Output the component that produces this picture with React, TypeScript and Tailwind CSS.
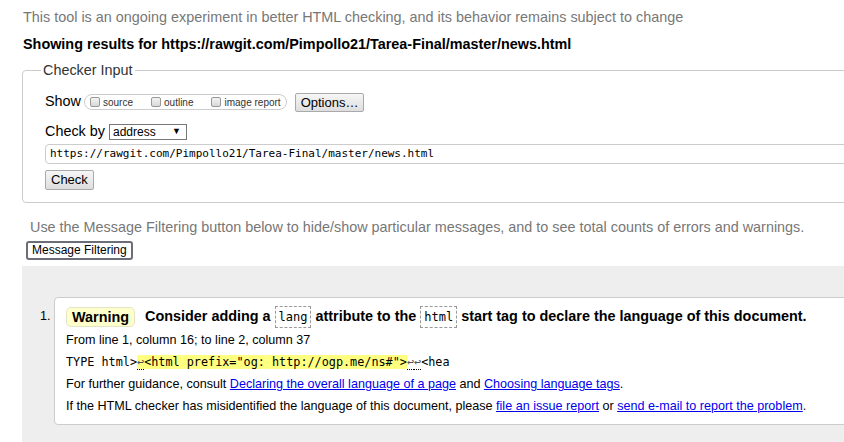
import React from 'react';

const Box: React.FC<{ children: React.ReactNode }> = ({ children }) => (
  <code className="inline-block border border-dashed border-[#999] px-[3px] leading-[20px] font-['DejaVu_Sans_Mono',monospace] text-[12px] font-normal align-middle">
    {children}
  </code>
);

const Check: React.FC<{ label: string }> = ({ label }) => (
  <label className="flex items-center gap-[3px] text-[10px] text-[#333]">
    <span className="w-[10px] h-[10px] rounded-[2px] border border-[#999] bg-gradient-to-b from-[#f4f4f4] to-[#d8d8d8]" />
    {label}
  </label>
);

const Ret = () => <span className="border-b border-dotted border-black text-[#555]">↩</span>;

const link = 'text-[#00e] underline';

export default function App() {
  return (
    <div className="w-[844px] h-[442px] overflow-hidden bg-white font-['Liberation_Sans',Arial,sans-serif] text-[14.4px] text-black">
      <div className="w-[960px]">
        <p className="pl-[23px] pt-[7px] leading-[20px] text-[#777]">
          This tool is an ongoing experiment in better HTML checking, and its behavior remains subject to change
        </p>
        <p className="pl-[23px] mt-[7px] leading-[20px] font-bold">
          Showing results for https://rawgit.com/Pimpollo21/Tarea-Final/master/news.html
        </p>

        <fieldset className="ml-[22px] mt-[7px] border border-[#ccc] rounded-[4px] pl-[22px] pb-[11px]">
          <legend className="-ml-[4px] px-[2px] leading-[18px] text-[#333]">Checker Input</legend>

          <div className="flex items-center mt-[13px] h-[20px]">
            <span className="mr-[3px]">Show</span>
            <div className="flex items-center gap-[18px] h-[16px] border border-[#ccc] rounded-full pl-[5px] pr-[5px]">
              <Check label="source" />
              <Check label="outline" />
              <Check label="image report" />
            </div>
            <button className="ml-[8px] h-[19px] px-[5px] border border-[#aaa] rounded-[2px] bg-gradient-to-b from-[#f6f6f6] to-[#dedede] leading-[17px] text-[13px]">
              Options…
            </button>
          </div>

          <div className="flex items-center mt-[10px] h-[20px]">
            <span className="mr-[4px]">Check by</span>
            <div className="flex items-center justify-between w-[78px] h-[16px] border border-[#777] pl-[3px] pr-[5px] text-[12px]">
              <span>address</span>
              <span className="text-[9px]">▼</span>
            </div>
          </div>

          <div className="flex items-center mt-[2px] h-[20px] border border-[#ccc] rounded-[4px] px-[4px] font-['DejaVu_Sans_Mono',monospace] text-[11px]">
            https://rawgit.com/Pimpollo21/Tarea-Final/master/news.html
          </div>

          <button className="mt-[6px] h-[20px] px-[5px] border border-[#aaa] rounded-[2px] bg-gradient-to-b from-[#f6f6f6] to-[#dedede] leading-[18px] text-[13px]">
            Check
          </button>
        </fieldset>

        <p className="pl-[30px] mt-[14px] leading-[20px] text-[#777]">
          Use the Message Filtering button below to hide/show particular messages, and to see total counts of errors and warnings.
        </p>
        <button className="ml-[26px] mt-[4px] h-[19px] px-[4px] border-2 border-[#6b6e78] rounded-[3px] bg-white text-[12px] leading-[15px]">
          Message Filtering
        </button>

        <div className="ml-[22px] mt-[6px] bg-[#eee] pt-[31px] pb-[18px] pl-[18px]">
          <div className="flex">
            <span className="w-[14px] pt-[9px] leading-[20px] text-[12.6px]">1.</span>
            <div className="flex-1 border border-[#ccc] rounded-[4px] bg-white pl-[11px] pt-[7px] pb-[7px] text-[12.6px]">
              <p className="flex items-center gap-[6px] h-[24px] font-bold text-[14.4px]">
                <span className="border border-[#e4e4c4] bg-[#ffffcc] rounded-[5px] px-[5px] leading-[18px]">Warning</span>
                <span className="ml-[4px] flex items-center gap-[4px]">
                  Consider adding a <Box>lang</Box> attribute to the <Box>html</Box> start tag to declare the language of this document.
                </span>
              </p>
              <p className="leading-[22px]">From line 1, column 16; to line 2, column 37</p>
              <p className="leading-[22px] font-['DejaVu_Sans_Mono',monospace] text-[11.8px] whitespace-pre">
                TYPE html&gt;
                <span className="bg-[#ffff80]">
                  <Ret />&lt;html prefix="og: http://ogp.me/ns#"&gt;
                </span>
                <Ret />
                <Ret />
                &lt;hea
              </p>
              <p className="leading-[22px]">
                For further guidance, consult{' '}
                <a className={link}>Declaring the overall language of a page</a> and{' '}
                <a className={link}>Choosing language tags</a>.
              </p>
              <p className="leading-[22px]">
                If the HTML checker has misidentified the language of this document, please{' '}
                <a className={link}>file an issue report</a> or{' '}
                <a className={link}>send e-mail to report the problem</a>.
              </p>
            </div>
          </div>
          <div className="h-[40px]" />
        </div>
      </div>
    </div>
  );
}
